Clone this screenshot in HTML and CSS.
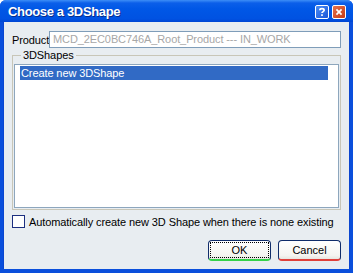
FILE: index.html
```html
<!DOCTYPE html>
<html>
<head>
<meta charset="utf-8">
<link rel="stylesheet" href="styles.css">
</head>
<body>
<div class="window">
  <div class="titlebar">
    <span class="title">Choose a 3DShape</span>
    <div class="tb-buttons">
      <span class="tb-btn help"><svg width="14" height="14" viewBox="0 0 14 14"><path d="M4.5 5 C4.5 2.5 9.5 2.5 9.5 5 C9.5 6.6 7 6.6 7 8.3" fill="none" stroke="#fff" stroke-width="2"/><rect x="6" y="9.6" width="2" height="2" fill="#fff"/></svg></span>
      <span class="tb-btn close"><svg width="14" height="14" viewBox="0 0 14 14"><path d="M4 4 L10 10 M10 4 L4 10" stroke="#fff" stroke-width="2"/></svg></span>
    </div>
  </div>
  <div class="client">
    <div class="product-row">
      <span class="label">Product</span>
      <div class="input">MCD_2EC0BC746A_Root_Product --- IN_WORK</div>
    </div>
    <fieldset class="group">
      <legend>3DShapes</legend>
      <div class="listbox">
        <div class="item selected">Create new 3DShape</div>
      </div>
    </fieldset>
    <label class="check-row">
      <span class="checkbox"></span>
      <span>Automatically create new 3D Shape when there is none existing</span>
    </label>
    <div class="buttons">
      <button class="btn ok"><span class="focus">OK</span></button>
      <button class="btn cancel"><span>Cancel</span></button>
    </div>
  </div>
</div>
</body>
</html>
```

FILE: styles.css
```css
html, body { margin: 0; padding: 0; }
body {
  width: 353px; height: 273px; overflow: hidden;
  font-family: "Liberation Sans", Arial, sans-serif;
  font-size: 11px;
  letter-spacing: -0.1px;
  color: #000;
}
.window {
  width: 353px; height: 273px;
  box-sizing: border-box;
  display: flex; flex-direction: column;
  background: #0a4fdc;
  border-radius: 6px 6px 0 0;
  overflow: hidden;
}
.titlebar {
  height: 22px; flex: none;
  display: flex; align-items: center; justify-content: space-between;
  padding: 0 7px 0 8px;
  background: linear-gradient(#3d8ef7 0px, #0b5fe9 3px, #0057e6 40%, #0052e2 85%, #0046d4 100%);
}
.title {
  color: #fff; font-weight: bold; font-size: 13px;
  letter-spacing: -0.35px;
  font-family: "Liberation Sans", Arial, sans-serif;
  text-shadow: 1px 1px 0 #0a2d8a;
  padding-top: 1px;
}
.tb-buttons { display: flex; gap: 3px; padding-top: 2px; }
.tb-btn {
  width: 14px; height: 14px; box-sizing: border-box;
  border: 1px solid #fff; border-radius: 2px;
  display: flex; align-items: center; justify-content: center;
}
.tb-btn svg { display: block; }
.help { background: linear-gradient(135deg, #4a8df5, #1b56d8); }
.close { background: linear-gradient(135deg, #e5734f, #c63a14); }
.client {
  flex: 1;
  margin: 0 4px 4px 4px;
  background: #e8edf1;
  box-shadow: -1px 0 0 #0b46d0, 1px 0 0 #0b46d0;
  display: flex; flex-direction: column;
  padding: 9px 8px 8px 8px;
}
.product-row { display: flex; align-items: center; height: 17px; }
.label { width: 37px; flex: none; }
.input {
  flex: 1; height: 17px; box-sizing: border-box;
  border: 1px solid #7f9db9; background: #fff;
  color: #a7a7a7; padding: 1px 0 0 3px; line-height: 13px;
  white-space: nowrap; overflow: hidden;
}
.group {
  margin: 1px 0 0 0; padding: 2px 1px 1px 1px;
  border: 1px solid #c8c6b8; border-radius: 0;
  min-width: 0;
}
.group legend {
  padding: 0 2px; margin-left: 7px; line-height: 13px;
}
.listbox {
  height: 144px; box-sizing: border-box;
  border: 1px solid #8da6bd; background: #fff;
  padding: 1px 0 0 5px;
}
.item { width: 308px; height: 14px; line-height: 14px; padding-left: 1px; box-sizing: border-box; }
.item.selected { background: #316ac5; color: #fff; }
.check-row {
  display: flex; align-items: center; gap: 4px;
  margin-top: 5px; height: 13px;
}
.checkbox {
  width: 13px; height: 13px; box-sizing: border-box; flex: none;
  border: 1px solid #1c2f80; background: #fff;
}
.buttons {
  margin-top: auto; display: flex; justify-content: flex-end; gap: 7px;
}
.btn {
  width: 63px; height: 21px; box-sizing: border-box;
  border: 1px solid #0f2c6a; border-bottom-width: 2px; border-radius: 4px;
  background: linear-gradient(#ffffff, #f4f4f0 80%, #e6e6e0);
  font: inherit; font-size: 11px; color: #000; padding: 2px;
  display: flex;
}
.btn span { flex: 1; display: flex; align-items: center; justify-content: center; }
.btn.ok { border-bottom-color: #35d24a; }
.btn.cancel { border-bottom-color: #e0403a; margin-right: 0; }
.focus { outline: 1px dotted #000; }
```
